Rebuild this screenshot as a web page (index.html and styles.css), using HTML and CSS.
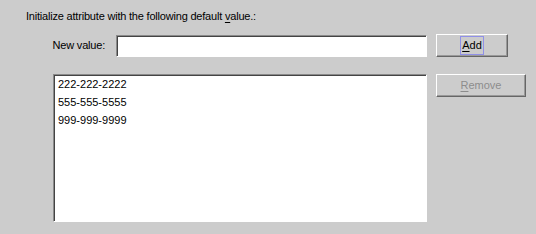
FILE: index.html
```
<!DOCTYPE html>
<html lang="en">
<head>
<meta charset="UTF-8" />
<title>Default value</title>
<link rel="stylesheet" href="styles.css">
</head>
<body>
<div class="panel">
  <div class="title">Initialize attribute with the following default <u>v</u>alue.:</div>

  <div class="entry-row">
    <label class="entry-label" for="newValue">New value:</label>
    <input type="text" id="newValue" class="field" />
    <button class="btn btn-add"><span class="focus"><u>A</u>dd</span></button>
  </div>

  <div class="list-row">
    <div class="list">
      <div class="item">222-222-2222</div>
      <div class="item">555-555-5555</div>
      <div class="item">999-999-9999</div>
    </div>
    <button class="btn btn-remove" disabled><u>R</u>emove</button>
  </div>
</div>
</body>
</html>
```

FILE: styles.css
```
html, body {
  margin: 0;
  background: #cccccc;
}
body {
  font-family: "Liberation Sans", Arial, sans-serif;
  font-size: 11px;
  line-height: 13px;
  color: #000;
}
u {
  text-underline-offset: 2px;
}
.panel {
  padding-top: 10px;
}
.title {
  padding-left: 26px;
  letter-spacing: -0.2px;
}
.entry-row {
  display: flex;
  align-items: center;
  margin-top: 11px;
}
.entry-label {
  width: 105px;
  text-align: right;
  margin-right: 11px;
  letter-spacing: -0.2px;
}
.field {
  box-sizing: border-box;
  width: 311px;
  height: 22px;
  margin: 0 9px 0 0;
  padding: 0 3px;
  background: #fff;
  border: 1px solid;
  border-color: #8a8a8a #fff #fff #8a8a8a;
  box-shadow: inset 1px 1px 0 #444;
  outline: none;
  font: inherit;
}
.btn {
  box-sizing: border-box;
  height: 23px;
  padding: 0;
  background: #cccccc;
  border: 1px solid;
  border-color: #fff #666 #666 #fff;
  box-shadow: inset -1px -1px 0 #999;
  font: inherit;
  color: #000;
}
.btn-add {
  width: 72px;
  display: flex;
  align-items: center;
  justify-content: center;
}
.focus {
  display: inline-block;
  height: 19px;
  line-height: 19px;
  padding: 0 1px;
  border-left: 1px solid #9090e8;
  border-right: 1px solid #9090e8;
  box-shadow: inset 0 1px 0 #9090e8, inset 0 -1px 0 #9090e8;
}
.btn-remove {
  width: 90px;
  color: #8c8c8c;
}
.list-row {
  display: flex;
  align-items: flex-start;
  gap: 9px;
  margin-top: 17px;
  padding-left: 53px;
}
.list {
  box-sizing: border-box;
  width: 374px;
  height: 148px;
  padding: 0 0 0 4px;
  background: #fff;
  border: 1px solid;
  border-color: #8a8a8a #fff #fff #8a8a8a;
  box-shadow: inset 1px 1px 0 #444;
}
.item {
  height: 18px;
  line-height: 18px;
}
```
